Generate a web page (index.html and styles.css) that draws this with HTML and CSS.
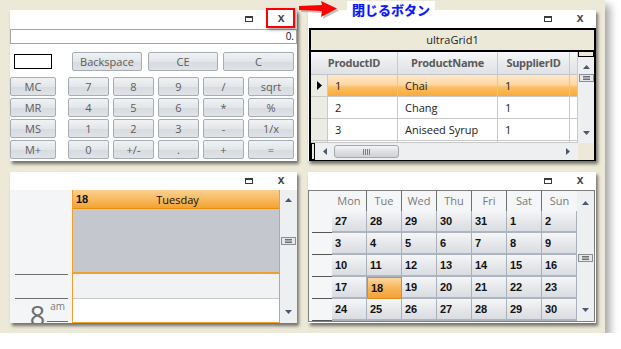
FILE: index.html
```html
<!DOCTYPE html>
<html>
<head>
    <title>閉じるボタン</title>
    <link rel="stylesheet" href="styles.css">
</head>
<body>
    <div class="frame">
        <!-- 電卓 -->
        <div class="window">
            <div class="titlebar">
                <span class="btn-max"></span>
                <span class="btn-close">x</span>
            </div>
            <div class="calc-display">0.</div>
            <div class="calc-top">
                <div class="memory-box"></div>
                <div class="key bksp">Backspace</div>
                <div class="key ce">CE</div>
                <div class="key clr">C</div>
            </div>
            <div class="calc-keys">
                <div class="key mem">MC</div>
                <div class="key">7</div>
                <div class="key">8</div>
                <div class="key">9</div>
                <div class="key">/</div>
                <div class="key">sqrt</div>
                <div class="key mem">MR</div>
                <div class="key">4</div>
                <div class="key">5</div>
                <div class="key">6</div>
                <div class="key">*</div>
                <div class="key">%</div>
                <div class="key mem">MS</div>
                <div class="key">1</div>
                <div class="key">2</div>
                <div class="key">3</div>
                <div class="key">-</div>
                <div class="key">1/x</div>
                <div class="key mem">M+</div>
                <div class="key">0</div>
                <div class="key">+/-</div>
                <div class="key">.</div>
                <div class="key">+</div>
                <div class="key">=</div>
            </div>
        </div>

        <!-- グリッド -->
        <div class="window">
            <div class="titlebar">
                <span class="btn-max"></span>
                <span class="btn-close">x</span>
            </div>
            <div class="ugrid">
                <div class="ug-caption">ultraGrid1</div>
                <div class="ug-body">
                    <div class="ug-table">
                        <div class="hc span2">ProductID</div>
                        <div class="hc">ProductName</div>
                        <div class="hc">SupplierID</div>
                        <div class="hc"></div>

                        <div class="sel">
                            <svg width="5" height="9" viewBox="0 0 5 9"><polygon points="0,0 5,4.5 0,9" fill="#000"/></svg>
                        </div>
                        <div class="dc active">1</div>
                        <div class="dc active">Chai</div>
                        <div class="dc active">1</div>
                        <div class="dc active"></div>

                        <div class="sel"></div>
                        <div class="dc">2</div>
                        <div class="dc">Chang</div>
                        <div class="dc">1</div>
                        <div class="dc"></div>

                        <div class="sel"></div>
                        <div class="dc">3</div>
                        <div class="dc">Aniseed Syrup</div>
                        <div class="dc">1</div>
                        <div class="dc"></div>

                        <div class="sel"></div>
                        <div class="dc"></div>
                        <div class="dc"></div>
                        <div class="dc"></div>
                        <div class="dc"></div>
                    </div>
                    <div class="ug-vscroll">
                        <div class="vs-cap"></div>
                        <div class="vscroll grid-pos">
                            <svg class="arr" width="7" height="4"><polygon points="0,4 3.5,0 7,4"/></svg>
                            <svg class="thumb" width="15" height="8"><rect x="0.5" y="0.5" width="14" height="7" fill="#e6e7e9" stroke="#8a8d93"/><line x1="4" y1="2.5" x2="11" y2="2.5" stroke="#6b6e74"/><line x1="4" y1="4" x2="11" y2="4" stroke="#6b6e74"/><line x1="4" y1="5.5" x2="11" y2="5.5" stroke="#6b6e74"/></svg>
                            <svg class="arr down" width="7" height="4"><polygon points="0,0 7,0 3.5,4"/></svg>
                        </div>
                    </div>
                </div>
                <div class="ug-hscroll">
                    <div class="hs-box"></div>
                    <div class="hs-track">
                        <svg width="4" height="7"><polygon points="4,0 4,7 0,3.5" fill="#4b5873"/></svg>
                        <div class="hs-thumb">
                            <svg width="8" height="6"><g stroke="#7a7d82"><line x1="0.5" y1="0" x2="0.5" y2="6"/><line x1="2.5" y1="0" x2="2.5" y2="6"/><line x1="4.5" y1="0" x2="4.5" y2="6"/><line x1="6.5" y1="0" x2="6.5" y2="6"/></g></svg>
                        </div>
                        <svg class="hs-right" width="4" height="7"><polygon points="0,0 4,3.5 0,7" fill="#4b5873"/></svg>
                    </div>
                    <div class="hs-corner"></div>
                </div>
            </div>
        </div>

        <!-- 日ビュー -->
        <div class="window">
            <div class="titlebar">
                <span class="btn-max"></span>
                <span class="btn-close">x</span>
            </div>
            <div class="dayview">
                <div class="timecol">
                    <div class="tc-gap"></div>
                    <div class="tc-line"></div>
                    <div class="tc-half"></div>
                    <div class="tc-line"></div>
                    <div class="tc-hour">
                        <span class="hr">8</span>
                        <span class="ampm">am</span>
                    </div>
                </div>
                <div class="daycol">
                    <div class="day-head">
                        <b>18</b>
                        <span>Tuesday</span>
                    </div>
                    <div class="allday"></div>
                    <div class="slot shaded"></div>
                    <div class="slot"></div>
                </div>
                <div class="vscroll day-pos">
                    <svg class="arr" width="7" height="4"><polygon points="0,4 3.5,0 7,4"/></svg>
                    <svg class="thumb" width="15" height="8"><rect x="0.5" y="0.5" width="14" height="7" fill="#e6e7e9" stroke="#8a8d93"/><line x1="4" y1="2.5" x2="11" y2="2.5" stroke="#6b6e74"/><line x1="4" y1="4" x2="11" y2="4" stroke="#6b6e74"/><line x1="4" y1="5.5" x2="11" y2="5.5" stroke="#6b6e74"/></svg>
                    <svg class="arr down" width="7" height="4"><polygon points="0,0 7,0 3.5,4"/></svg>
                </div>
            </div>
        </div>

        <!-- 月ビュー -->
        <div class="window">
            <div class="titlebar">
                <span class="btn-max"></span>
                <span class="btn-close">x</span>
            </div>
            <div class="monthview">
                <div class="wk-col">
                    <div class="wk-head"></div>
                    <div class="wk"></div>
                    <div class="wk"></div>
                    <div class="wk"></div>
                    <div class="wk"></div>
                    <div class="wk"></div>
                </div>
                <div class="mgrid">
                    <div class="dow">Mon</div>
                    <div class="dow">Tue</div>
                    <div class="dow">Wed</div>
                    <div class="dow">Thu</div>
                    <div class="dow">Fri</div>
                    <div class="dow">Sat</div>
                    <div class="dow">Sun</div>

                    <div class="day">27</div>
                    <div class="day">28</div>
                    <div class="day">29</div>
                    <div class="day">30</div>
                    <div class="day">31</div>
                    <div class="day">1</div>
                    <div class="day">2</div>

                    <div class="day">3</div>
                    <div class="day">4</div>
                    <div class="day">5</div>
                    <div class="day">6</div>
                    <div class="day">7</div>
                    <div class="day">8</div>
                    <div class="day">9</div>

                    <div class="day">10</div>
                    <div class="day">11</div>
                    <div class="day">12</div>
                    <div class="day">13</div>
                    <div class="day">14</div>
                    <div class="day">15</div>
                    <div class="day">16</div>

                    <div class="day">17</div>
                    <div class="day today">18</div>
                    <div class="day">19</div>
                    <div class="day">20</div>
                    <div class="day">21</div>
                    <div class="day">22</div>
                    <div class="day">23</div>

                    <div class="day">24</div>
                    <div class="day">25</div>
                    <div class="day">26</div>
                    <div class="day">27</div>
                    <div class="day">28</div>
                    <div class="day">29</div>
                    <div class="day">30</div>

                    <div class="day"></div>
                    <div class="day"></div>
                    <div class="day"></div>
                    <div class="day"></div>
                    <div class="day"></div>
                    <div class="day"></div>
                    <div class="day"></div>
                </div>
                <div class="vscroll month-pos">
                    <svg class="arr" width="7" height="4"><polygon points="0,4 3.5,0 7,4"/></svg>
                    <svg class="thumb" width="15" height="8"><rect x="0.5" y="0.5" width="14" height="7" fill="#e6e7e9" stroke="#8a8d93"/><line x1="4" y1="2.5" x2="11" y2="2.5" stroke="#6b6e74"/><line x1="4" y1="4" x2="11" y2="4" stroke="#6b6e74"/><line x1="4" y1="5.5" x2="11" y2="5.5" stroke="#6b6e74"/></svg>
                    <svg class="arr down" width="7" height="4"><polygon points="0,0 7,0 3.5,4"/></svg>
                </div>
            </div>
        </div>

        <!-- 注釈 -->
        <div class="mark-close"></div>
        <svg class="note-arrow" width="44" height="20" viewBox="0 0 44 20">
            <polygon points="2,7 25,6 24,2 40,9.5 24,18 25,12 2,11" fill="#9a9a9a" opacity="0.6"/>
            <polygon points="0,5 23,4 22,0 38,7.5 22,16 23,10 0,9" fill="#ff0000"/>
        </svg>
        <div class="note-label">閉じるボタン</div>
    </div>
</body>
</html>
```

FILE: styles.css
```css
body {
    margin: 0;
    background: #fff;
    font-family: 'Open Sans', 'Noto Sans', sans-serif;
    color: #222;
}
.frame {
    position: relative;
    width: 605px;
    height: 333px;
    box-sizing: border-box;
    padding: 10px 0 0 10px;
    background: #ece9d9;
    box-shadow: 5px 5px 8px rgba(0,0,0,0.35);
    display: grid;
    grid-template-columns: 287px 288px;
    grid-template-rows: 151px 151px;
    column-gap: 11px;
    row-gap: 11px;
}
.window {
    background: #fff;
    box-shadow: 2px 3px 3px rgba(0,0,0,0.5);
    display: flex;
    flex-direction: column;
    overflow: hidden;
}
.titlebar {
    height: 18px;
    flex: none;
    display: flex;
    justify-content: flex-end;
    align-items: center;
    padding-right: 12px;
}
.btn-max {
    width: 8px;
    height: 6px;
    box-sizing: border-box;
    border: 1px solid #3a3a3a;
    border-top-width: 2px;
}
.btn-close {
    width: 8px;
    margin-left: 24px;
    text-align: center;
    font-family: 'Liberation Mono', monospace;
    font-weight: bold;
    font-size: 12px;
    line-height: 12px;
    color: #444;
}

/* 電卓 */
.calc-display {
    margin-top: 1px;
    height: 15px;
    box-sizing: border-box;
    border: 1px solid #a9a898;
    padding-right: 2px;
    text-align: right;
    font-size: 10px;
    line-height: 13px;
    color: #111;
}
.calc-top {
    display: flex;
    align-items: center;
    height: 19px;
    margin-top: 8px;
}
.memory-box {
    width: 38px;
    height: 15px;
    box-sizing: border-box;
    margin-left: 4px;
    border: 1px solid #000;
}
.key {
    box-sizing: border-box;
    height: 19px;
    border: 1px solid #a6adb5;
    border-radius: 2px;
    background: linear-gradient(#f0f2f4, #e3e6e9 50%, #d7dbdf 51%, #dfe2e6);
    color: #5c5c5c;
    font-size: 11px;
    line-height: 17px;
    text-align: center;
}
.bksp {
    width: 70px;
    margin-left: 20px;
}
.ce {
    width: 70px;
    margin-left: 6px;
}
.clr {
    width: 71px;
    margin-left: 5px;
}
.calc-keys {
    margin-top: 6px;
    display: grid;
    grid-template-columns: 54px 41px 41px 41px 41px 46px;
    grid-auto-rows: 19px;
    column-gap: 4px;
    row-gap: 2px;
}
.key.mem {
    width: 46px;
}

/* グリッド */
.ugrid {
    margin-left: 1px;
    width: 287px;
    box-sizing: border-box;
    border: 2px solid #000;
    display: flex;
    flex-direction: column;
}
.ug-caption {
    height: 20px;
    background: #ece9d8;
    border-bottom: 2px solid #000;
    text-align: center;
    font-size: 11px;
    line-height: 20px;
    color: #222;
}
.ug-body {
    display: flex;
    height: 91px;
}
.ug-table {
    width: 267px;
    display: grid;
    grid-template-columns: 17px 70px 100px 72px 8px;
    grid-template-rows: 23px 22px 22px 22px 2px;
    overflow: hidden;
}
.hc {
    box-sizing: border-box;
    border-right: 1px solid #c9cbce;
    border-bottom: 1px solid #c2c4c7;
    background: linear-gradient(#f7f8f9, #e9ebed 50%, #dfe2e5);
    text-align: center;
    font-size: 11px;
    font-weight: bold;
    letter-spacing: -0.3px;
    line-height: 22px;
    color: #5a5a5a;
    white-space: nowrap;
}
.hc.span2 {
    grid-column: span 2;
}
.sel {
    box-sizing: border-box;
    border-right: 1px solid #c9c9c9;
    border-bottom: 1px solid #c9c9c9;
    background: #edece4;
    display: flex;
    align-items: center;
    justify-content: center;
}
.dc {
    box-sizing: border-box;
    border-right: 1px solid #c9c9c9;
    border-bottom: 1px solid #c9c9c9;
    padding-left: 7px;
    font-size: 11px;
    line-height: 21px;
    color: #222;
    white-space: nowrap;
}
.dc.active {
    background: linear-gradient(#fee9cc, #fdd7a2 45%, #fbbd60 60%, #f9ab3c);
}
.ug-vscroll {
    width: 16px;
    display: flex;
    flex-direction: column;
}
.vs-cap {
    height: 5px;
    box-sizing: border-box;
    border: 1px solid #000;
    border-top: none;
    background: #ece9d8;
}
.vscroll {
    flex: 1;
    background: #eeeff1;
    display: flex;
    flex-direction: column;
    align-items: center;
}
.vscroll .arr {
    fill: #4b5873;
    flex: none;
}
.vscroll .thumb {
    flex: none;
}
.vscroll .down {
    margin-top: auto;
}
.grid-pos {
    padding: 8px 0 8px;
}
.grid-pos .thumb {
    margin-top: 5px;
}
.ug-hscroll {
    display: flex;
    height: 17px;
}
.hs-box {
    width: 4px;
    box-sizing: border-box;
    border: 1px solid #000;
    background: #ece9d8;
}
.hs-track {
    flex: 1;
    background: #eeeff1;
    display: flex;
    align-items: center;
    padding-left: 8px;
    padding-right: 8px;
}
.hs-thumb {
    width: 65px;
    height: 13px;
    box-sizing: border-box;
    margin-left: 7px;
    border: 1px solid #a3a6ab;
    border-radius: 3px;
    background: linear-gradient(#f4f5f6, #dcdee1 55%, #cfd2d6);
    display: flex;
    align-items: center;
    justify-content: center;
}
.hs-right {
    margin-left: auto;
}
.hs-corner {
    width: 16px;
    background: #ece9d8;
}

/* 日ビュー */
.dayview {
    flex: 1;
    display: flex;
    overflow: hidden;
}
.timecol {
    width: 62px;
    background: #f4f5f7;
    display: flex;
    flex-direction: column;
    overflow: hidden;
}
.tc-gap {
    height: 84px;
    flex: none;
}
.tc-half {
    height: 23px;
    flex: none;
}
.tc-line {
    height: 1px;
    flex: none;
    margin: 0 4px 0 5px;
    background: #6e6e6e;
}
.tc-hour {
    display: flex;
    justify-content: flex-end;
    padding-right: 4px;
}
.hr {
    margin-top: 3px;
    margin-right: 2px;
    font-size: 27px;
    line-height: 27px;
    color: #6e6e6e;
}
.ampm {
    height: 23px;
    box-sizing: border-box;
    padding: 0 3px;
    border-bottom: 1px solid #6e6e6e;
    font-size: 10px;
    line-height: 14px;
    color: #7a7a7a;
}
.daycol {
    width: 208px;
    box-sizing: border-box;
    border: 1px solid #f0a030;
    border-top: none;
    display: flex;
    flex-direction: column;
}
.day-head {
    height: 19px;
    box-sizing: border-box;
    border-bottom: 1px solid #e8900c;
    background: linear-gradient(#fbd08e, #f8bb62 50%, #f4a232);
    display: grid;
    grid-template-columns: 1fr auto 1fr;
    align-items: center;
    padding-left: 3px;
    font-size: 11px;
    color: #111;
}
.day-head b {
    font-family: 'Liberation Sans', sans-serif;
    font-size: 11px;
}
.allday {
    height: 63px;
    background: #c4c7ce;
    border-bottom: 2px solid #f0a030;
}
.slot {
    height: 23px;
    background: #fff;
}
.slot.shaded {
    height: 24px;
    background: #f1f2f4;
    border-bottom: 1px solid #c9c9cc;
}
.day-pos {
    width: 17px;
    flex: none;
    padding: 8px 0 9px;
}
.day-pos .thumb {
    margin-top: 35px;
}

/* 月ビュー */
.monthview {
    flex: 1;
    display: flex;
    margin-right: 1px;
    margin-bottom: 1px;
    border: 1px solid #7e7e7e;
    overflow: hidden;
}
.wk-col {
    width: 23px;
    background: #f5f6f8;
    display: flex;
    flex-direction: column;
}
.wk-head {
    height: 20px;
}
.wk {
    height: 22px;
    box-sizing: border-box;
    margin-left: 3px;
    border-bottom: 1px solid #555;
}
.mgrid {
    width: 245px;
    display: grid;
    grid-template-columns: repeat(7, 35px);
    grid-template-rows: 20px repeat(6, 22px);
    overflow: hidden;
    background: #f5f6f8;
}
.dow {
    box-sizing: border-box;
    border-right: 1px solid #707070;
    text-align: center;
    font-size: 11px;
    line-height: 20px;
    color: #7a7a7a;
}
.dow:nth-child(7) {
    border-right: none;
}
.day {
    box-sizing: border-box;
    border-right: 1px solid #a9b1bb;
    border-bottom: 2px solid #adb5c0;
    background: linear-gradient(#f5f6f8, #e6e8eb 50%, #d9dce1);
    padding-left: 3px;
    font-family: 'Liberation Sans', sans-serif;
    font-size: 11px;
    font-weight: bold;
    line-height: 20px;
    color: #111;
}
.day.today {
    border: 1px solid #e08a1a;
    background: linear-gradient(#fbd6a2, #f7b658 50%, #f2a23a);
}
.month-pos {
    width: 17px;
    flex: none;
    padding: 10px 0 9px;
}
.month-pos .thumb {
    margin-top: 49px;
}

/* 注釈 */
.mark-close {
    position: absolute;
    left: 266px;
    top: 8px;
    width: 29px;
    height: 20px;
    box-sizing: border-box;
    border: 2px solid #f00;
    box-shadow: 2px 2px 3px rgba(0,0,0,0.35);
}
.note-arrow {
    position: absolute;
    left: 299px;
    top: 1px;
}
.note-label {
    position: absolute;
    left: 347px;
    top: 1px;
    width: 88px;
    height: 18px;
    background: #fff;
    text-align: center;
    font-family: 'Noto Sans CJK JP', sans-serif;
    font-weight: bold;
    font-size: 13px;
    line-height: 18px;
    color: #0b16ff;
    text-shadow: 0 0 1px #8890ff;
}
```
